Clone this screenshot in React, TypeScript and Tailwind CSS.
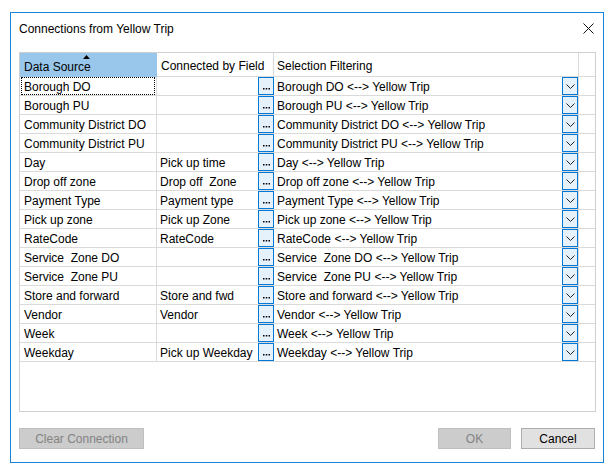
import React from 'react';

type Row = { source: string; field: string };

const rows: Row[] = [
  { source: 'Borough DO', field: '' },
  { source: 'Borough PU', field: '' },
  { source: 'Community District DO', field: '' },
  { source: 'Community District PU', field: '' },
  { source: 'Day', field: 'Pick up time' },
  { source: 'Drop off zone', field: 'Drop off  Zone' },
  { source: 'Payment Type', field: 'Payment type' },
  { source: 'Pick up zone', field: 'Pick up Zone' },
  { source: 'RateCode', field: 'RateCode' },
  { source: 'Service  Zone DO', field: '' },
  { source: 'Service  Zone PU', field: '' },
  { source: 'Store and forward', field: 'Store and fwd' },
  { source: 'Vendor', field: 'Vendor' },
  { source: 'Week', field: '' },
  { source: 'Weekday', field: 'Pick up Weekday' },
];

const font = { fontFamily: '"Liberation Sans", Arial, sans-serif' };

const EllipsisButton: React.FC = () => (
  <div className="w-[16px] h-full bg-[#e5f1fb] border border-[#0078d7] flex items-end justify-center pb-[4px] shrink-0">
    <svg width="7" height="2" viewBox="0 0 7 2">
      <rect x="0" y="0" width="1.5" height="1.5" fill="#000" />
      <rect x="2.75" y="0" width="1.5" height="1.5" fill="#000" />
      <rect x="5.5" y="0" width="1.5" height="1.5" fill="#000" />
    </svg>
  </div>
);

const DropButton: React.FC = () => (
  <div className="w-[16px] h-full bg-[#e5f1fb] border border-[#0078d7] flex items-center justify-center shrink-0">
    <svg width="9" height="5" viewBox="0 0 9 5">
      <path d="M0.5 0.5 L4.5 4.5 L8.5 0.5" fill="none" stroke="#222" strokeWidth="1" />
    </svg>
  </div>
);

const GridRow: React.FC<{ row: Row; focused?: boolean }> = ({ row, focused }) => (
  <div className="flex h-[19px] border-b border-[#dadada] text-[12px] text-black">
    <div className="w-[137px] border-r border-[#dadada] relative flex items-center pl-[4px] pt-[1px] whitespace-pre">
      {focused && <div className="absolute left-[1px] top-0 right-[1px] bottom-[0px] border border-dotted border-black" />}
      {row.source}
    </div>
    <div className="w-[117px] flex items-stretch">
      <div className="flex-1 flex items-center pl-[3px] pt-[1px] whitespace-pre">{row.field}</div>
      <EllipsisButton />
    </div>
    <div className="w-[305px] flex items-stretch border-r border-[#dadada]">
      <div className="flex-1 flex items-center pl-[3px] pt-[1px] whitespace-pre">{row.source} &lt;--&gt; Yellow Trip</div>
      <DropButton />
    </div>
  </div>
);

export default function App() {
  return (
    <div className="min-h-screen bg-white pt-[12px] pl-[10px]" style={font}>
      <div className="w-[594px] h-[451px] border border-[#1883d7] bg-white flex flex-col">
        <div className="h-[39px] flex items-start justify-between pl-[8px] pr-[8px] pt-[8px]">
          <span className="text-[12px] leading-[16px] text-black">Connections from Yellow Trip</span>
          <svg width="11" height="11" viewBox="0 0 11 11" className="mt-[2px] mr-[1px]">
            <path d="M0.5 0.5 L10.5 10.5 M10.5 0.5 L0.5 10.5" stroke="#111" strokeWidth="1" />
          </svg>
        </div>

        <div className="mx-[8px] w-[577px] h-[360px] border border-[#cfcfcf] flex flex-col">
          <div className="flex h-[24px] text-[12px] text-black">
            <div className="w-[137px] bg-[#99c7eb] relative flex items-center pl-[4px] pt-[3px]">
              <svg width="7" height="4" viewBox="0 0 7 4" className="absolute left-[63px] top-[2px]">
                <path d="M3.5 0 L7 4 L0 4 Z" fill="#000" />
              </svg>
              Data Source
            </div>
            <div className="w-[117px] border-b border-r border-[#dadada] flex items-center pl-[4px] pt-[3px]">Connected by Field</div>
            <div className="w-[305px] border-b border-r border-[#dadada] flex items-center pl-[3px] pt-[3px]">Selection Filtering</div>
            <div className="flex-1 border-b border-[#dadada]" />
          </div>
          {rows.map((r, i) => (
            <GridRow key={r.source} row={r} focused={i === 0} />
          ))}
        </div>

        <div className="flex items-center mt-[16px] px-[8px] text-[12px]">
          <div className="w-[125px] h-[21px] bg-[#cccccc] border border-[#bfbfbf] text-[#838383] flex items-center justify-center">Clear Connection</div>
          <div className="flex-1" />
          <div className="w-[73px] h-[21px] bg-[#cccccc] border border-[#bfbfbf] text-[#838383] flex items-center justify-center">OK</div>
          <div className="w-[74px] h-[21px] ml-[10px] bg-[#e1e1e1] border border-[#adadad] text-black flex items-center justify-center">Cancel</div>
        </div>
      </div>
    </div>
  );
}
